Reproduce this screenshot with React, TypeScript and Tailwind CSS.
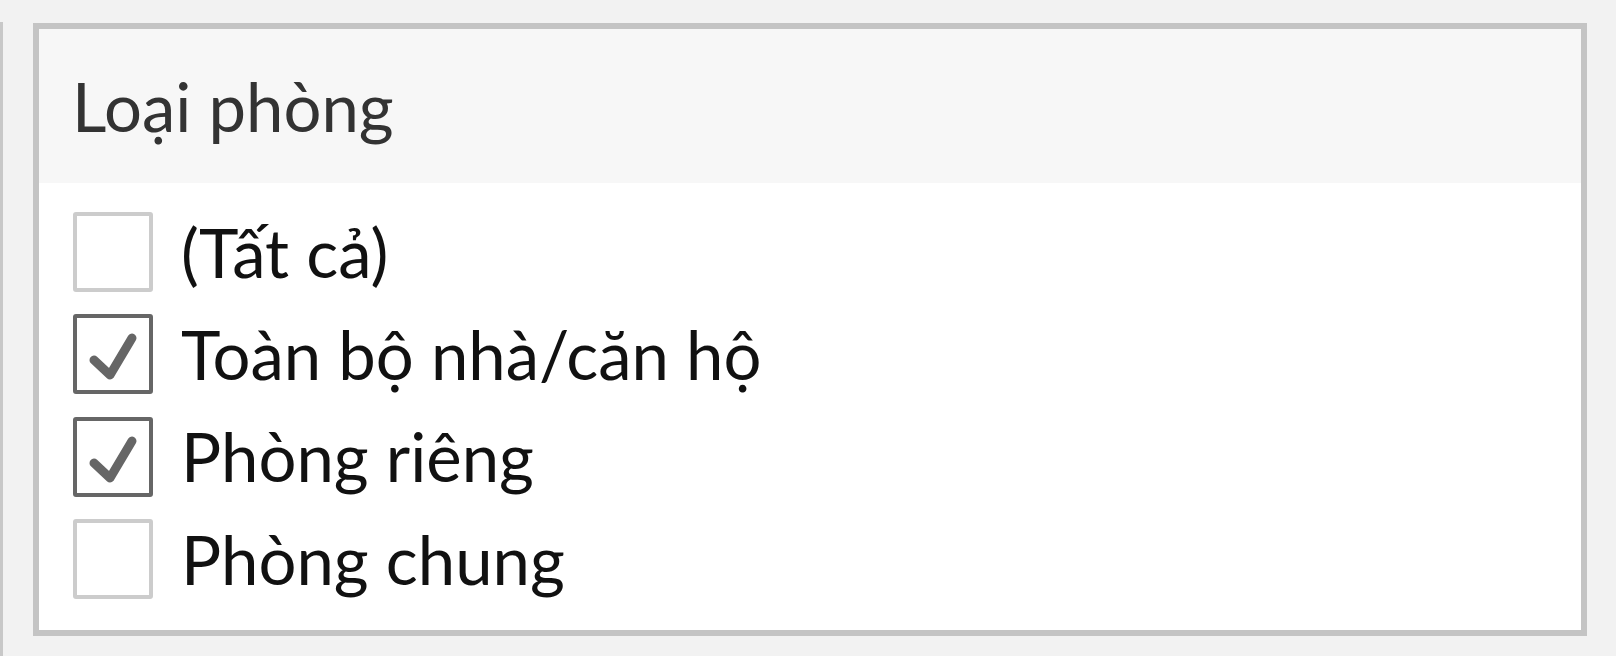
import React from 'react';

const options = [
  { label: '(Tất cả)', checked: false },
  { label: 'Toàn bộ nhà/căn hộ', checked: true },
  { label: 'Phòng riêng', checked: true },
  { label: 'Phòng chung', checked: false },
];

function CheckBox({ checked }: { checked: boolean }) {
  return (
    <div
      className={`w-[80px] h-[80px] shrink-0 rounded-[3px] border-[4px] bg-white flex items-center justify-center ${
        checked ? 'border-[#666666]' : 'border-[#cccccc]'
      }`}
    >
      {checked && (
        <svg viewBox="0 0 72 72" className="w-[72px] h-[72px]" fill="none">
          <path d="M17 42 L33 57 L55 20" stroke="#666666" strokeWidth="9" strokeLinecap="round" strokeLinejoin="round" />
        </svg>
      )}
    </div>
  );
}

export default function App() {
  return (
    <div
      className="w-[1616px] h-[656px] bg-[#f2f2f2] flex overflow-hidden"
      style={{ fontFamily: 'Lato, "Noto Sans", sans-serif' }}
    >
      {/* edge of the neighbouring panel */}
      <div className="w-[3px] mt-[22px] bg-[#c8c8c8] shrink-0" />

      <section className="ml-[30px] mt-[23px] w-[1554px] h-[613px] border-[6px] border-[#c4c4c4] bg-white flex flex-col">
        <header className="h-[154px] bg-[#f7f7f7] flex items-center pl-[33px]">
          <h2 className="text-[67px] text-[#333333] leading-none">Loại phòng</h2>
        </header>

        <div className="flex flex-col gap-[22.4px] pt-[29px] pl-[34px]">
          {options.map((opt) => (
            <label key={opt.label} className="flex items-center gap-[28px] h-[80px]">
              <CheckBox checked={opt.checked} />
              <span className="text-[67px] text-[#111111] leading-none">{opt.label}</span>
            </label>
          ))}
        </div>
      </section>
    </div>
  );
}
